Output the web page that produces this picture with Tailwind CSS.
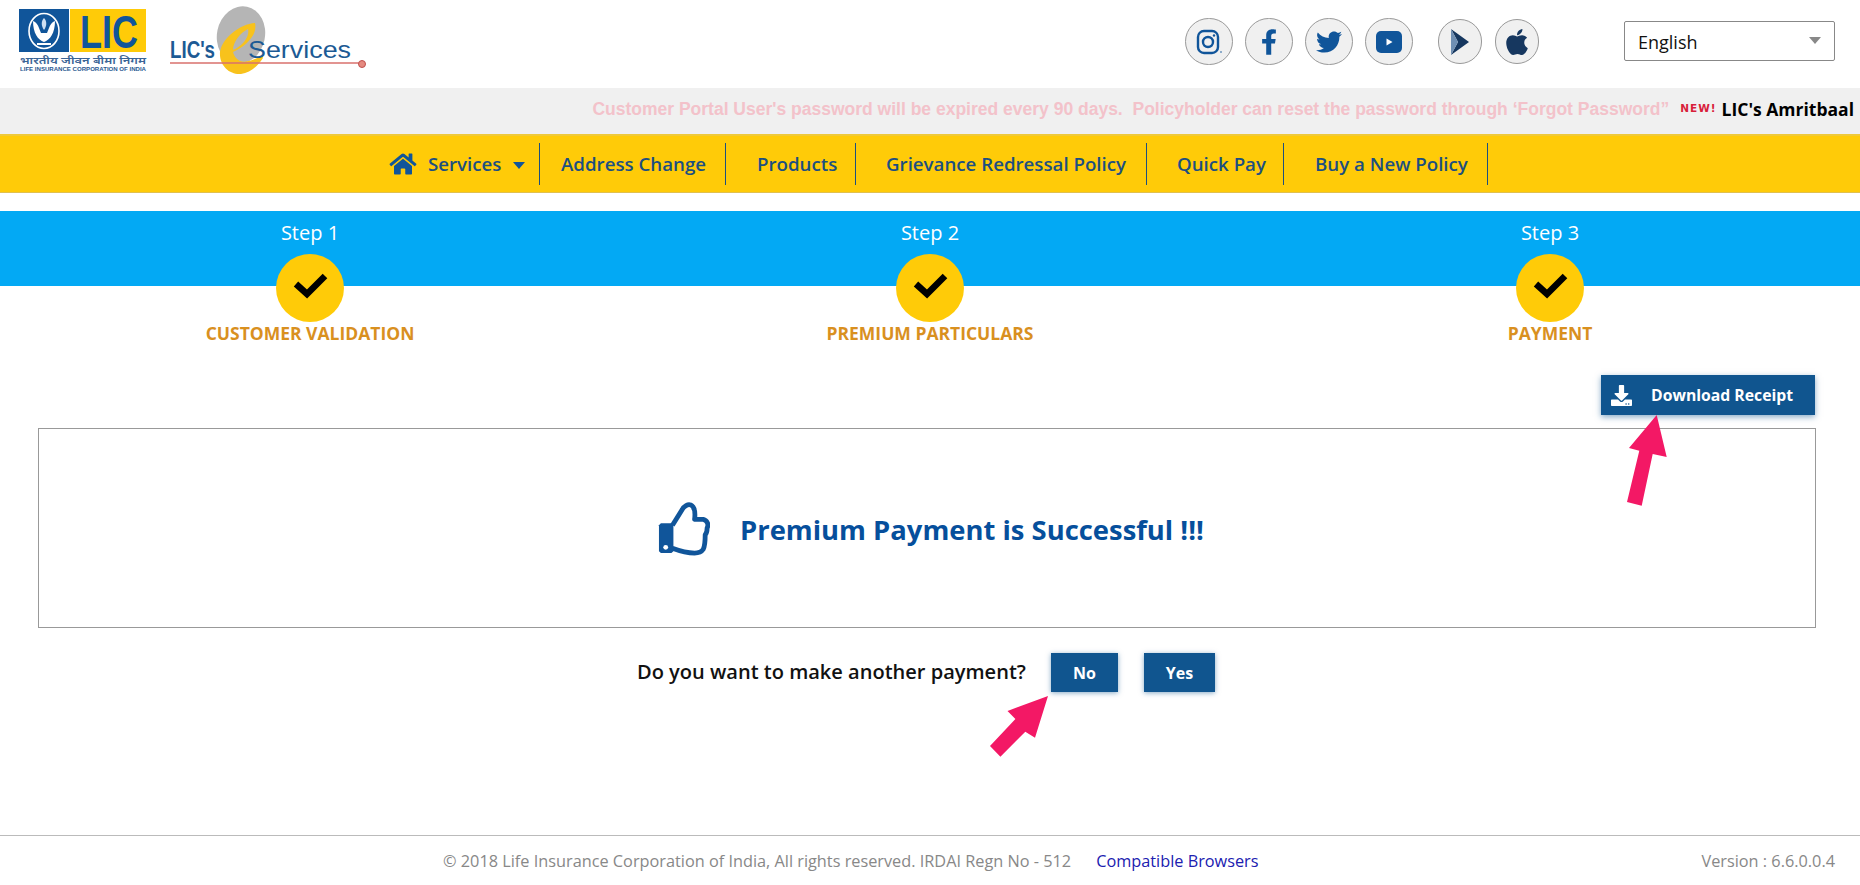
<!DOCTYPE html>
<html lang="en">

<head>
    <meta charset="UTF-8">
    <meta name="viewport" content="width=device-width, initial-scale=1.0">
    <title>LIC e-Services</title>
    <script src="https://cdn.jsdelivr.net/npm/@tailwindcss/browser@4"></script>
</head>

<body class="bg-white h-[885px] overflow-hidden font-['Open_Sans',sans-serif]">
    <!-- Header -->
    <header class="h-[88px] flex items-start">
        <svg class="w-[400px] h-[88px] shrink-0" viewBox="0 0 400 88">
            <rect x="19" y="9" width="50" height="43" fill="#10559a" />
            <rect x="70" y="9" width="76" height="43" fill="#ffcb08" />
            <ellipse cx="44" cy="31" rx="15" ry="17.5" fill="none" stroke="#fff" stroke-width="1.6" />
            <path d="M33 21C33 33 38 40 44 42C50 40 55 33 55 21C52 22 50 25 49 28L47 33H41L39 28C38 25 36 22 33 21z" fill="#fff" />
            <rect x="37" y="43" width="14" height="2" fill="#fff" />
            <path d="M44 18c3 3 3 8 0 12c-3-4-3-9 0-12z" fill="#cfe0f2" />
            <text x="80" y="48" font-family="Liberation Sans" font-weight="700" font-size="46" textLength="58" lengthAdjust="spacingAndGlyphs" fill="#10559a">LIC</text>
            <text x="20" y="64" font-family="Noto Sans, Noto Sans Devanagari, sans-serif" font-weight="600" font-size="10" textLength="126" lengthAdjust="spacingAndGlyphs" fill="#3a6496">भारतीय जीवन बीमा निगम</text>
            <text x="20" y="71" font-family="Liberation Sans" font-weight="700" font-size="5" textLength="126" lengthAdjust="spacingAndGlyphs" fill="#2c5a92">LIFE INSURANCE CORPORATION OF INDIA</text>
            <ellipse cx="241" cy="35" rx="24" ry="29" transform="rotate(12 241 35)" fill="#b5b5b5" />
            <path fill-rule="evenodd" d="M255 23C240 24 222 38 220 52C219 66 230 75 241 74C250 73 258 66 263 58L262 55C255 60 246 63 240 61C236 59 234 56 233 52C245 47 258 35 255 23zM233 50C233 42 240 33 248 29C250 36 243 46 233 50z" fill="#f8c21c" />
            <text x="170" y="58" font-family="Liberation Sans" font-weight="700" font-size="23" textLength="45" lengthAdjust="spacingAndGlyphs" fill="#1c5a94">LIC's</text>
            <text x="248" y="58" font-family="Liberation Sans" font-size="24" textLength="103" lengthAdjust="spacingAndGlyphs" fill="#1c5a94">Services</text>
            <line x1="170" y1="63" x2="360" y2="63" stroke="#d9706c" stroke-width="1.5" />
            <circle cx="362" cy="64" r="3.5" fill="#e58a80" stroke="#c0504d" />
        </svg>

        <div class="flex items-center ml-[785px] mt-[18px] gap-[12px]">
            <a class="w-[48px] h-[47px] rounded-full border border-[#999] bg-[#f0f0f0] flex items-center justify-center">
                <svg class="w-[26px] h-[26px]" viewBox="0 0 26 26" fill="none" stroke="#10559a">
                    <rect x="2" y="2" width="20" height="22" rx="6" stroke-width="2.4" />
                    <circle cx="12" cy="13" r="5" stroke-width="2.4" />
                    <circle cx="18" cy="6.5" r="1.2" fill="#10559a" stroke="none" />
                    <circle cx="25" cy="23" r="0.8" fill="#10559a" stroke="none" />
                </svg>
            </a>
            <a class="w-[48px] h-[47px] rounded-full border border-[#999] bg-[#f0f0f0] flex items-center justify-center">
                <svg class="w-[16px] h-[26px]" viewBox="0 0 320 512" fill="#10559a">
                    <path d="M279.14 288l14.22-92.66h-88.91v-60.13c0-25.35 12.42-50.06 52.24-50.06h40.42V6.26S260.43 0 225.36 0c-73.22 0-121.08 44.38-121.08 124.72v70.62H22.89V288h81.39v224h100.17V288z" />
                </svg>
            </a>
            <a class="w-[48px] h-[47px] rounded-full border border-[#999] bg-[#f0f0f0] flex items-center justify-center">
                <svg class="w-[26px] h-[26px]" viewBox="0 0 512 512" fill="#10559a">
                    <path d="M459.37 151.716c.325 4.548.325 9.097.325 13.645 0 138.72-105.583 298.558-298.558 298.558-59.452 0-114.68-17.219-161.137-47.106 8.447.974 16.568 1.299 25.34 1.299 49.055 0 94.213-16.568 130.274-44.832-46.132-.975-84.792-31.188-98.112-72.772 6.498.974 12.995 1.624 19.818 1.624 9.421 0 18.843-1.3 27.614-3.573-48.081-9.747-84.143-51.98-84.143-102.985v-1.299c13.969 7.797 30.214 12.67 47.431 13.319-28.264-18.843-46.781-51.005-46.781-87.391 0-19.492 5.197-37.36 14.294-52.954 51.655 63.675 129.3 105.258 216.365 109.807-1.624-7.797-2.599-15.918-2.599-24.04 0-57.828 46.782-104.934 104.934-104.934 30.213 0 57.502 12.67 76.67 33.137 23.715-4.548 46.456-13.32 66.599-25.34-7.798 24.366-24.366 44.833-46.132 57.827 21.117-2.273 41.584-8.122 60.426-16.243-14.292 20.791-32.161 39.308-52.628 54.253z" />
                </svg>
            </a>
            <a class="w-[48px] h-[47px] rounded-full border border-[#999] bg-[#f0f0f0] flex items-center justify-center">
                <svg class="w-[26px] h-[22px]" viewBox="0 0 26 22">
                    <rect width="26" height="22" rx="5" fill="#10559a" />
                    <path d="M10.5 7.5l6 3.5-6 3.5z" fill="#fff" />
                </svg>
            </a>
            <a class="w-[44px] h-[45px] ml-[13px] rounded-full border border-[#999] bg-[#f0f0f0] flex items-center justify-center">
                <svg class="w-[20px] h-[28px]" viewBox="0 0 20 28">
                    <path d="M1 1l18 13L1 27l7-13z" fill="#16375f" />
                    <path d="M1 1l7 13-7 13z" fill="#6f8fb3" />
                </svg>
            </a>
            <a class="w-[44px] h-[45px] ml-[1px] rounded-full border border-[#999] bg-[#f0f0f0] flex items-center justify-center">
                <svg class="w-[22px] h-[30px]" viewBox="0 0 384 512" preserveAspectRatio="none" fill="#16375f">
                    <path d="M318.7 268.7c-.2-36.7 16.4-64.4 50-84.8-18.8-26.9-47.2-41.7-84.7-44.6-35.5-2.8-74.3 20.7-88.5 20.7-15 0-49.4-19.7-76.4-19.7C63.3 141.2 4 184.8 4 273.5q0 39.3 14.4 81.2c12.8 36.7 59 126.7 107.2 125.2 25.2-.6 43-17.9 75.8-17.9 31.8 0 48.3 17.9 76.4 17.9 48.6-.7 90.4-82.5 102.6-119.3-65.2-30.7-61.7-90-61.7-91.9zm-56.6-164.2c27.3-32.4 24.8-61.9 24-72.5-24.1 1.4-52 16.4-67.9 34.9-17.5 19.8-27.8 44.3-25.6 71.9 26.1 2 49.9-11.4 69.5-34.3z" />
                </svg>
            </a>
        </div>

        <div class="relative ml-[85px] mt-[21px] w-[211px] h-[40px]">
            <select class="appearance-none w-full h-full border border-[#888] rounded-[2px] bg-white pl-[13px] pt-[2px] text-[18px] text-[#111]">
                <option>English</option>
            </select>
            <span class="absolute right-[14px] top-[16px] w-0 h-0 border-x-[6px] border-x-transparent border-t-[7px] border-t-[#888]"></span>
        </div>
    </header>

    <!-- Notice strip -->
    <div class="h-[46px] pb-[4px] bg-[#f0f0f0] flex items-center justify-end pr-[6px] overflow-hidden whitespace-nowrap">
        <span class="font-['Liberation_Sans',sans-serif] font-bold text-[17.5px] text-[#f3c2ca] whitespace-pre">Customer Portal User's password will be expired every 90 days.  Policyholder can reset the password through ‘Forgot Password”</span>
        <span class="ml-[11px] mr-[5px] text-[10.5px] font-extrabold text-[#d8203a] tracking-[1px] font-['DejaVu_Sans',sans-serif]">NEW!</span>
        <span class="font-bold text-[17.5px] text-black">LIC's Amritbaal</span>
    </div>

    <!-- Menu -->
    <nav class="h-[59px] bg-[#ffcb08] border-t-2 border-[#efc93a] border-b border-b-[#e0c050] flex items-center pl-[389px] text-[18.7px] font-semibold text-[#1c4f80]">
        <a class="w-[151px] h-[42px] border-r border-[#1c4f80] flex items-center">
            <svg class="w-[28px] h-[24px] mr-[11px]" viewBox="0 0 576 512" fill="#10559a">
                <path d="M280.37 148.26L96 300.11V464a16 16 0 0 0 16 16l112.06-.29a16 16 0 0 0 15.92-16V368a16 16 0 0 1 16-16h64a16 16 0 0 1 16 16v95.64a16 16 0 0 0 16 16.05L464 480a16 16 0 0 0 16-16V300L295.67 148.26a12.19 12.19 0 0 0-15.3 0zM571.6 251.47L488 182.56V44.05a12 12 0 0 0-12-12h-56a12 12 0 0 0-12 12v72.61L318.47 43a48 48 0 0 0-61 0L4.34 251.47a12 12 0 0 0-1.6 16.9l25.5 31A12 12 0 0 0 45.15 301l235.22-193.74a12.19 12.19 0 0 1 15.3 0L530.9 301a12 12 0 0 0 16.9-1.6l25.5-31a12 12 0 0 0-1.7-16.93z" />
            </svg>
            Services
            <span class="ml-[12px] mt-[2px] w-0 h-0 border-x-[6px] border-x-transparent border-t-[7px] border-t-[#10559a]"></span>
        </a>
        <a class="w-[186px] h-[42px] border-r border-[#1c4f80] flex items-center pl-[21px]">Address Change</a>
        <a class="w-[130px] h-[42px] border-r border-[#1c4f80] flex items-center pl-[31px]">Products</a>
        <a class="w-[291px] h-[42px] border-r border-[#1c4f80] flex items-center pl-[30px]">Grievance Redressal Policy</a>
        <a class="w-[137px] h-[42px] border-r border-[#1c4f80] flex items-center pl-[30px]">Quick Pay</a>
        <a class="w-[204px] h-[42px] border-r border-[#1c4f80] flex items-center pl-[31px]">Buy a New Policy</a>
    </nav>

    <!-- Steps -->
    <section class="relative mt-[18px] h-[147px] grid grid-cols-3 text-center">
        <div class="absolute inset-x-0 top-0 h-[75px] bg-[#03a9f4]"></div>
        <div class="relative flex flex-col items-center">
            <span class="h-[43px] pt-[8px] text-[20px] leading-[28px] text-white">Step 1</span>
            <span class="w-[68px] h-[68px] rounded-full bg-[#ffcb08] flex items-center justify-center">
                <svg class="w-[68px] h-[68px]" viewBox="0 0 68 68" fill="none" stroke="#000" stroke-width="6.5"><path d="M20 30l11 10 18-18" /></svg>
            </span>
            <span class="mt-[-2px] text-[17.5px] font-bold text-[#d9901f]">CUSTOMER VALIDATION</span>
        </div>
        <div class="relative flex flex-col items-center">
            <span class="h-[43px] pt-[8px] text-[20px] leading-[28px] text-white">Step 2</span>
            <span class="w-[68px] h-[68px] rounded-full bg-[#ffcb08] flex items-center justify-center">
                <svg class="w-[68px] h-[68px]" viewBox="0 0 68 68" fill="none" stroke="#000" stroke-width="6.5"><path d="M20 30l11 10 18-18" /></svg>
            </span>
            <span class="mt-[-2px] text-[17.5px] font-bold text-[#d9901f]">PREMIUM PARTICULARS</span>
        </div>
        <div class="relative flex flex-col items-center">
            <span class="h-[43px] pt-[8px] text-[20px] leading-[28px] text-white">Step 3</span>
            <span class="w-[68px] h-[68px] rounded-full bg-[#ffcb08] flex items-center justify-center">
                <svg class="w-[68px] h-[68px]" viewBox="0 0 68 68" fill="none" stroke="#000" stroke-width="6.5"><path d="M20 30l11 10 18-18" /></svg>
            </span>
            <span class="mt-[-2px] text-[17.5px] font-bold text-[#d9901f]">PAYMENT</span>
        </div>
    </section>

    <!-- Result -->
    <main class="relative px-[38px] pr-[44px] pt-[17px] h-[477px]">
        <div class="flex justify-end h-[53px] pr-[1px]">
            <button class="w-[214px] h-[40px] pt-[1px] bg-[#10558f] shadow-[0_2px_6px_rgba(16,85,143,0.5)] flex items-center pl-[10px] text-[15.75px] font-bold text-white">
                <svg class="w-[21px] h-[21px] mr-[19px]" viewBox="0 0 512 512" fill="#fff">
                    <path d="M216 0h80c13.3 0 24 10.7 24 24v168h87.7c17.8 0 26.7 21.5 14.1 34.1L269.7 378.3c-7.5 7.5-19.8 7.5-27.3 0L90.1 226.1c-12.6-12.6-3.7-34.1 14.1-34.1H192V24c0-13.3 10.7-24 24-24zm296 376v112c0 13.3-10.7 24-24 24H24c-13.3 0-24-10.7-24-24V376c0-13.3 10.7-24 24-24h146.7l49 49c20.1 20.1 52.5 20.1 72.6 0l49-49H488c13.3 0 24 10.7 24 24zm-124 88c0-11-9-20-20-20s-20 9-20 20 9 20 20 20 20-9 20-20zm64 0c0-11-9-20-20-20s-20 9-20 20 9 20 20 20 20-9 20-20z" />
                </svg>
                Download Receipt
            </button>
        </div>

        <div class="h-[200px] border border-[#999] flex items-center pl-[619px]">
            <svg class="w-[52px] h-[57px] mr-[30px] mt-[2px]" viewBox="-1 -1 54 57" fill="none">
                <path d="M14 23L24 7C26 3 30 1 33 2C37 4 38 9 37 17L46 17C50 18 52 22 50 26C50 30 49 32 48 33C48 38 48 44 46 48C44 51 41 52 37 52C30 52 22 50 14 47" stroke="#10559a" stroke-width="5" stroke-linejoin="round" />
                <path d="M2 21H15V50L13 52H2L0 50V23z" fill="#10559a" />
                <circle cx="7" cy="46" r="2.5" fill="#fff" />
            </svg>
            <h1 class="mt-[3px] text-[27.4px] font-bold text-[#064f9c] whitespace-nowrap">Premium Payment is Successful !!!</h1>
        </div>

        <div class="mt-[25px] flex items-center pl-[599px]">
            <span class="w-[414px] text-[20.05px] font-semibold text-[#111]">Do you want to make another payment?</span>
            <button class="w-[67px] h-[39px] bg-[#10558f] shadow-[0_1px_5px_rgba(16,85,143,0.5)] text-[16px] font-bold text-white">No</button>
            <button class="ml-[26px] w-[71px] h-[39px] bg-[#10558f] shadow-[0_1px_5px_rgba(16,85,143,0.5)] text-[16px] font-bold text-white">Yes</button>
        </div>

        <!-- Pointer arrows drawn over the page -->
        <svg class="absolute left-[1620px] top-[54px] w-[50px] h-[95px]" viewBox="1620 412 50 95" fill="#f31865">
            <path d="M1656.7 415L1629 448L1639.3 450.7L1627 502L1641.7 505.7L1652.7 454L1666.7 457z" />
        </svg>
        <svg class="absolute left-[985px] top-[335px] w-[65px] h-[65px]" viewBox="985 693 65 65" fill="#f31865">
            <path d="M1048 696L1007.5 711L1015.4 719L990 746L1000.4 756.7L1025.3 731.7L1035 737.7z" />
        </svg>
    </main>

    <!-- Footer -->
    <footer class="h-[50px] pt-[1px] border-t border-[#bbb] flex items-center text-[16.3px] text-[#888] whitespace-nowrap">
        <span class="ml-[443px]">© 2018 Life Insurance Corporation of India, All rights reserved. IRDAI Regn No - 512</span>
        <a class="ml-[25px] text-[#2020b0]">Compatible Browsers</a>
        <span class="ml-auto mr-[25px]">Version : 6.6.0.0.4</span>
    </footer>
</body>

</html>
